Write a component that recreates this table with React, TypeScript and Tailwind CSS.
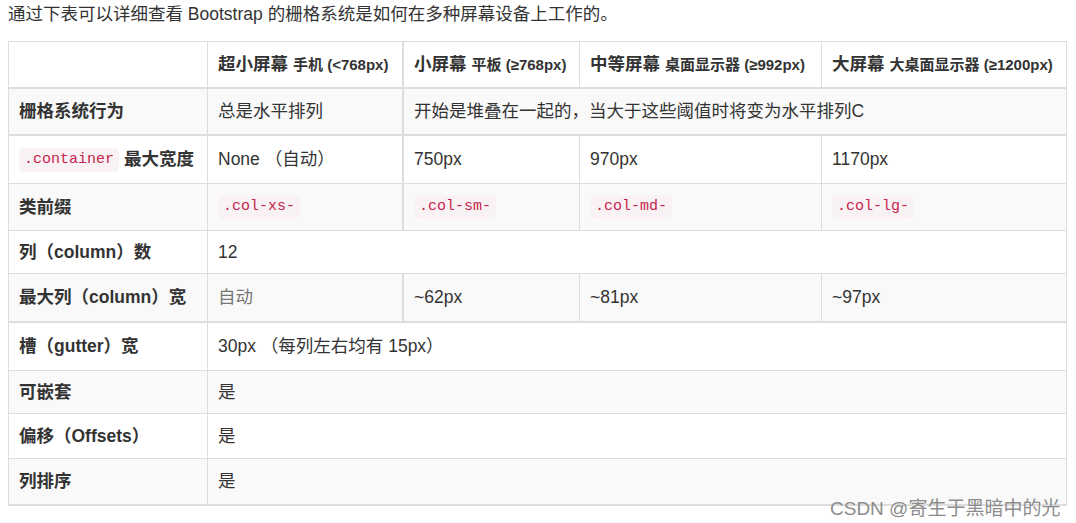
import React from "react";

const FONT = '"Liberation Sans", "Noto Sans CJK SC", sans-serif';

function Code({ children }: { children: React.ReactNode }) {
  return (
    <code
      className="inline-block h-[24px] px-[5px] rounded-[5px] bg-[#f9f2f4] text-[#c7254e] text-[15px] leading-[24px] font-normal"
      style={{ fontFamily: '"Liberation Mono", "DejaVu Sans Mono", monospace' }}
    >
      {children}
    </code>
  );
}

function Cell({
  children,
  className = "",
}: {
  children?: React.ReactNode;
  className?: string;
}) {
  return (
    <div className={`flex items-center pl-[10px] whitespace-nowrap ${className}`}>
      {children}
    </div>
  );
}

const GRID = "grid grid-cols-[198px_195px_177px_242px_245px]";

export default function App() {
  return (
    <div
      className="relative w-[1076px] h-[523px] bg-white text-[#333] text-[17.5px] leading-[25px] overflow-hidden"
      style={{ fontFamily: FONT }}
    >
      <p className="mt-[2px] ml-[8px] h-[25px]">
        通过下表可以详细查看 Bootstrap 的栅格系统是如何在多种屏幕设备上工作的。
      </p>
      <div className="ml-[8px] mt-[14px] w-[1059px] border-x border-t border-[#ddd]">
        {/* header */}
        <div className={`${GRID} h-[47px] border-b-2 border-[#ddd]`}>
          <Cell />
          <Cell className="border-l border-[#ddd] font-bold">
            超小屏幕<span className="text-[15px] ml-[5px]">手机 (&lt;768px)</span>
          </Cell>
          <Cell className="border-l-2 border-[#ddd] font-bold">
            小屏幕<span className="text-[15px] ml-[5px]">平板 (≥768px)</span>
          </Cell>
          <Cell className="border-l border-[#ddd] font-bold">
            中等屏幕<span className="text-[15px] ml-[5px]">桌面显示器 (≥992px)</span>
          </Cell>
          <Cell className="border-l border-[#ddd] font-bold">
            大屏幕<span className="text-[15px] ml-[5px]">大桌面显示器 (≥1200px)</span>
          </Cell>
        </div>
        {/* row 1 */}
        <div className={`${GRID} h-[47px] border-b-2 border-[#ddd] bg-[#f9f9f9]`}>
          <Cell className="font-bold">栅格系统行为</Cell>
          <Cell className="border-l border-[#ddd]">总是水平排列</Cell>
          <Cell className="col-span-3 border-l-2 border-[#ddd]">
            开始是堆叠在一起的，当大于这些阈值时将变为水平排列C
          </Cell>
        </div>
        {/* row 2 */}
        <div className={`${GRID} h-[48px] border-b border-[#ddd]`}>
          <Cell className="font-bold">
            <Code>.container</Code>
            <span className="ml-[5px]">最大宽度</span>
          </Cell>
          <Cell className="border-l border-[#ddd]">None （自动）</Cell>
          <Cell className="border-l-2 border-[#ddd]">750px</Cell>
          <Cell className="border-l border-[#ddd]">970px</Cell>
          <Cell className="border-l border-[#ddd]">1170px</Cell>
        </div>
        {/* row 3 */}
        <div className={`${GRID} h-[47px] border-b border-[#ddd] bg-[#f9f9f9]`}>
          <Cell className="font-bold">类前缀</Cell>
          <Cell className="border-l border-[#ddd]">
            <Code>.col-xs-</Code>
          </Cell>
          <Cell className="border-l-2 border-[#ddd]">
            <Code>.col-sm-</Code>
          </Cell>
          <Cell className="border-l border-[#ddd]">
            <Code>.col-md-</Code>
          </Cell>
          <Cell className="border-l border-[#ddd]">
            <Code>.col-lg-</Code>
          </Cell>
        </div>
        {/* row 4 */}
        <div className={`${GRID} h-[43px] border-b border-[#ddd]`}>
          <Cell className="font-bold">列（column）数</Cell>
          <Cell className="col-span-4 border-l border-[#ddd]">12</Cell>
        </div>
        {/* row 5 */}
        <div className={`${GRID} h-[49px] border-b-2 border-[#ddd] bg-[#f9f9f9]`}>
          <Cell className="font-bold">最大列（column）宽</Cell>
          <Cell className="border-l border-[#ddd] text-[#777]">自动</Cell>
          <Cell className="border-l-2 border-[#ddd]">~62px</Cell>
          <Cell className="border-l border-[#ddd]">~81px</Cell>
          <Cell className="border-l border-[#ddd]">~97px</Cell>
        </div>
        {/* row 6 */}
        <div className={`${GRID} h-[48px] border-b border-[#ddd]`}>
          <Cell className="font-bold">槽（gutter）宽</Cell>
          <Cell className="col-span-4 border-l border-[#ddd]">
            30px （每列左右均有 15px）
          </Cell>
        </div>
        {/* row 7 */}
        <div className={`${GRID} h-[43px] border-b border-[#ddd] bg-[#f9f9f9]`}>
          <Cell className="font-bold">可嵌套</Cell>
          <Cell className="col-span-4 border-l border-[#ddd]">是</Cell>
        </div>
        {/* row 8 */}
        <div className={`${GRID} h-[45px] border-b border-[#ddd]`}>
          <Cell className="font-bold">偏移（Offsets）</Cell>
          <Cell className="col-span-4 border-l border-[#ddd]">是</Cell>
        </div>
        {/* row 9 */}
        <div className={`${GRID} h-[47px] border-b-2 border-[#ddd] bg-[#f9f9f9]`}>
          <Cell className="font-bold">列排序</Cell>
          <Cell className="col-span-4 border-l border-[#ddd]">是</Cell>
        </div>
      </div>
      <div className="absolute left-[830px] top-[496px] text-[19px] leading-[26px] text-[#8c8c8c] whitespace-nowrap">
        CSDN @寄生于黑暗中的光
      </div>
    </div>
  );
}
